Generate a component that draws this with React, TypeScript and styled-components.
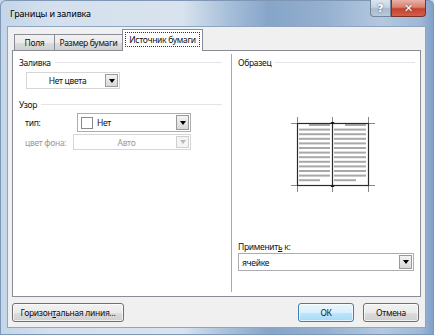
import React from "react";
import styled, { createGlobalStyle } from "styled-components";

const Global = createGlobalStyle`
  html, body { margin: 0; padding: 0; background: #c9d9ea; }
  body { font-family: "Noto Sans", "DejaVu Sans", sans-serif; }
  * { box-sizing: border-box; }
`;

const Window = styled.div`
  width: 434px;
  height: 335px;
  display: flex;
  flex-direction: column;
  padding: 0 8px 7px 7px;
  background:
    linear-gradient(90deg, #c3d5e9 0%, #d4e0ed 12%, #d8e3ef 42%, #a9c1da 52%, #86a5c9 62%, #95b0cf 75%, #b4c9e0 88%, #9db7d6 97%, #7f9fc6 100%);
  box-shadow: inset 0 0 0 1px #7f97b5;
  border-radius: 6px 6px 0 0;
  font-size: 8.5px;
  letter-spacing: -0.3px;
  white-space: nowrap;
  color: #111;
`;

const TitleBar = styled.div`
  height: 26px;
  display: flex;
  align-items: flex-start;
  flex-shrink: 0;
`;

const Title = styled.div`
  margin: 7px 0 0 3px;
  font-size: 9px;
  letter-spacing: -0.15px;
  line-height: 14px;
  color: #000;
  flex: 1;
`;

const CaptionBtn = styled.div<{ $kind: "help" | "close" }>`
  width: ${(p) => (p.$kind === "help" ? 21 : 35)}px;
  height: 17px;
  display: flex;
  align-items: center;
  justify-content: center;
  border: 1px solid ${(p) => (p.$kind === "help" ? "#71859d" : "#7a3228")};
  border-top: none;
  border-radius: ${(p) => (p.$kind === "help" ? "0 0 0 4px" : "0 0 4px 0")};
  background: ${(p) =>
    p.$kind === "help"
      ? "linear-gradient(#dce5ef 0%, #c4d2e1 45%, #a9bbd0 55%, #b9c9db 100%)"
      : "linear-gradient(#eab1a6 0%, #d9806f 45%, #c7402d 55%, #d2604a 100%)"};
  color: #fff;
  font-family: "DejaVu Sans", sans-serif;
  font-weight: bold;
  font-size: 11px;
  letter-spacing: 0;
  text-shadow: 0 0 2px #3a4a60;
`;

const Client = styled.div`
  flex: 1;
  display: flex;
  flex-direction: column;
  background: #f0f0f0;
  border: 1px solid #8fa4bf;
  padding: 2px 4px 5px 4px;
`;

const TabRow = styled.div`
  height: 21px;
  display: flex;
  align-items: flex-end;
  padding-left: 2px;
  flex-shrink: 0;
`;

const Tab = styled.div<{ $w: number; $active?: boolean }>`
  width: ${(p) => p.$w}px;
  height: ${(p) => (p.$active ? 22 : 16)}px;
  margin-bottom: ${(p) => (p.$active ? -1 : 0)}px;
  margin-left: -1px;
  position: relative;
  z-index: ${(p) => (p.$active ? 1 : 0)};
  display: flex;
  align-items: center;
  justify-content: center;
  border: 1px solid #898c95;
  border-bottom: none;
  background: ${(p) =>
    p.$active ? "#ffffff" : "linear-gradient(#f2f2f2 0%, #ebebeb 50%, #dddddd 51%, #cfcfcf 100%)"};
  padding-bottom: ${(p) => (p.$active ? 3 : 0)}px;
  &:first-child { margin-left: 0; }
`;

const FocusLabel = styled.span`
  border: 1px dotted #333;
  padding: 0 3px;
  line-height: 13px;
`;

const Panel = styled.div`
  height: 247px;
  flex-shrink: 0;
  background: #fff;
  border: 1px solid #898c95;
  display: flex;
`;

const LeftCol = styled.div`
  width: 218px;
  display: flex;
  flex-direction: column;
  padding: 4px 9px 0 6px;
`;

const Divider = styled.div`
  width: 1px;
  margin: 3px 0 4px;
  background: #a9a9a9;
`;

const RightCol = styled.div`
  flex: 1;
  display: flex;
  flex-direction: column;
  padding: 3px 5px 25px 6px;
`;

const GroupHeader = styled.div<{ $mt?: number }>`
  display: flex;
  align-items: center;
  height: 14px;
  margin-top: ${(p) => p.$mt ?? 0}px;
  &::after {
    content: "";
    flex: 1;
    height: 1px;
    margin-left: 4px;
    background: #e2e4e8;
  }
`;

const Row = styled.div<{ $mt?: number; $ml?: number }>`
  display: flex;
  align-items: center;
  margin-top: ${(p) => p.$mt ?? 0}px;
  margin-left: ${(p) => p.$ml ?? 0}px;
`;

const FieldLabel = styled.div<{ $w: number; $disabled?: boolean }>`
  width: ${(p) => p.$w}px;
  flex-shrink: 0;
  color: ${(p) => (p.$disabled ? "#9a9a9a" : "#111")};
`;

const Combo = styled.div<{ $w: number; $h: number; $disabled?: boolean; $light?: boolean }>`
  width: ${(p) => p.$w}px;
  height: ${(p) => p.$h}px;
  flex-shrink: 0;
  display: flex;
  align-items: stretch;
  background: #fff;
  border: 1px solid ${(p) => (p.$disabled || p.$light ? "#d6d6d6" : "#abadb3")};
  padding: 1px;
  color: ${(p) => (p.$disabled ? "#9a9a9a" : "#111")};
`;

const ComboText = styled.div<{ $center?: boolean }>`
  flex: 1;
  display: flex;
  align-items: center;
  justify-content: ${(p) => (p.$center ? "center" : "flex-start")};
  padding-left: 2px;
  gap: 4px;
`;

const ArrowBtn = styled.div<{ $disabled?: boolean }>`
  width: 13px;
  display: flex;
  align-items: center;
  justify-content: center;
  border: 1px solid ${(p) => (p.$disabled ? "#cfcfcf" : "#9a9a9a")};
  background: ${(p) => (p.$disabled ? "#f4f4f4" : "linear-gradient(#f3f3f3, #d9d9d9)")};
  &::before {
    content: "";
    width: 0;
    height: 0;
    border-left: 3.5px solid transparent;
    border-right: 3.5px solid transparent;
    border-top: 4px solid ${(p) => (p.$disabled ? "#b8b8b8" : "#000")};
  }
`;

const Swatch = styled.div`
  width: 12px;
  height: 12px;
  border: 1px solid #8a8a8a;
  background: #fff;
`;

const PreviewArea = styled.div`
  flex: 1;
  display: flex;
  align-items: center;
  justify-content: center;
  padding: 0 0 2px 2px;
`;

const ApplyLabel = styled.div`
  margin-bottom: 0;
  line-height: 13px;
`;

const Footer = styled.div`
  display: flex;
  align-items: center;
  gap: 9px;
  margin-top: 6px;
  padding-right: 2px;
`;

const Button = styled.div<{ $w: number; $default?: boolean }>`
  width: ${(p) => p.$w}px;
  height: 19px;
  display: flex;
  align-items: center;
  justify-content: center;
  border: 1px solid ${(p) => (p.$default ? "#3c7fb1" : "#707070")};
  border-radius: 3px;
  background: ${(p) =>
    p.$default
      ? "linear-gradient(#eaf6fd 0%, #d9f0fc 50%, #bee6fd 51%, #a7d9f5 100%)"
      : "linear-gradient(#f2f2f2 0%, #ebebeb 50%, #dddddd 51%, #cfcfcf 100%)"};
  box-shadow: inset 0 0 0 1px rgba(255, 255, 255, 0.7);
`;

const Spacer = styled.div`
  flex: 1;
`;

const U = styled.span`
  text-decoration: underline;
`;

function Preview() {
  const rows = Array.from({ length: 13 }, (_, i) => 13 + i * 4.6);
  return (
    <svg width="96" height="84" viewBox="0 0 96 84">
      {rows.map((y, i) => {
        const first = i === 0;
        const last = i === rows.length - 1;
        return (
          <g key={i} fill="#a8a8a8">
            <rect x={first ? 29 : 19} y={y - 1} width={first ? 21 : last ? 21 : 31} height={2} />
            <rect x={first ? 65 : 54} y={y - 1} width={first ? 21 : last ? 22 : 32} height={2} />
          </g>
        );
      })}
      <rect x="17.5" y="11.5" width="71" height="62" fill="none" stroke="#2b2b2b" strokeWidth="1.2" />
      <line x1="52.5" y1="11" x2="52.5" y2="74" stroke="#2b2b2b" strokeWidth="1.2" />
      <g stroke="#6a6a6a" strokeWidth="0.8">
        <line x1="17.5" y1="5" x2="17.5" y2="11" />
        <line x1="11" y1="11.5" x2="17" y2="11.5" />
        <line x1="52.5" y1="5" x2="52.5" y2="11" />
        <line x1="88.5" y1="5" x2="88.5" y2="11" />
        <line x1="89" y1="11.5" x2="95" y2="11.5" />
        <line x1="17.5" y1="74" x2="17.5" y2="80" />
        <line x1="11" y1="73.5" x2="17" y2="73.5" />
        <line x1="52.5" y1="74" x2="52.5" y2="80" />
        <line x1="88.5" y1="74" x2="88.5" y2="80" />
        <line x1="89" y1="73.5" x2="95" y2="73.5" />
      </g>
      <path d="M50.5 10 L54.5 10 L52.5 12.5 Z" fill="#111" />
      <path d="M50.5 75 L54.5 75 L52.5 72.5 Z" fill="#111" />
    </svg>
  );
}

export default function App() {
  return (
    <>
      <Global />
      <Window>
        <TitleBar>
          <Title>Границы и заливка</Title>
          <CaptionBtn $kind="help">?</CaptionBtn>
          <CaptionBtn $kind="close">✕</CaptionBtn>
        </TitleBar>
        <Client>
          <TabRow>
            <Tab $w={41}>Поля</Tab>
            <Tab $w={69}>Размер бумаги</Tab>
            <Tab $w={81} $active>
              <FocusLabel>Источник бумаги</FocusLabel>
            </Tab>
          </TabRow>
          <Panel>
            <LeftCol>
              <GroupHeader>Заливка</GroupHeader>
              <Row $mt={3} $ml={7}>
                <Combo $w={94} $h={17} $light>
                  <ComboText $center>Нет цвета</ComboText>
                  <ArrowBtn />
                </Combo>
              </Row>
              <GroupHeader $mt={8}>Узор</GroupHeader>
              <Row $mt={2} $ml={6}>
                <FieldLabel $w={52}>тип:</FieldLabel>
                <Combo $w={114} $h={19}>
                  <ComboText>
                    <Swatch />
                    Нет
                  </ComboText>
                  <ArrowBtn />
                </Combo>
              </Row>
              <Row $mt={2} $ml={6}>
                <FieldLabel $w={48} $disabled>
                  цвет фона:
                </FieldLabel>
                <Combo $w={118} $h={16} $disabled>
                  <ComboText $center>Авто</ComboText>
                  <ArrowBtn $disabled />
                </Combo>
              </Row>
            </LeftCol>
            <Divider />
            <RightCol>
              <GroupHeader $mt={1}>Образец</GroupHeader>
              <PreviewArea>
                <Preview />
              </PreviewArea>
              <ApplyLabel>
                Применит<U>ь</U> к:
              </ApplyLabel>
              <Combo $w={176} $h={18}>
                <ComboText>ячейке</ComboText>
                <ArrowBtn />
              </Combo>
            </RightCol>
          </Panel>
          <Footer>
            <Button $w={112}>
              <span>
                Горизон<U>т</U>альная линия...
              </span>
            </Button>
            <Spacer />
            <Button $w={56} $default>
              ОК
            </Button>
            <Button $w={56}>Отмена</Button>
          </Footer>
        </Client>
      </Window>
    </>
  );
}
